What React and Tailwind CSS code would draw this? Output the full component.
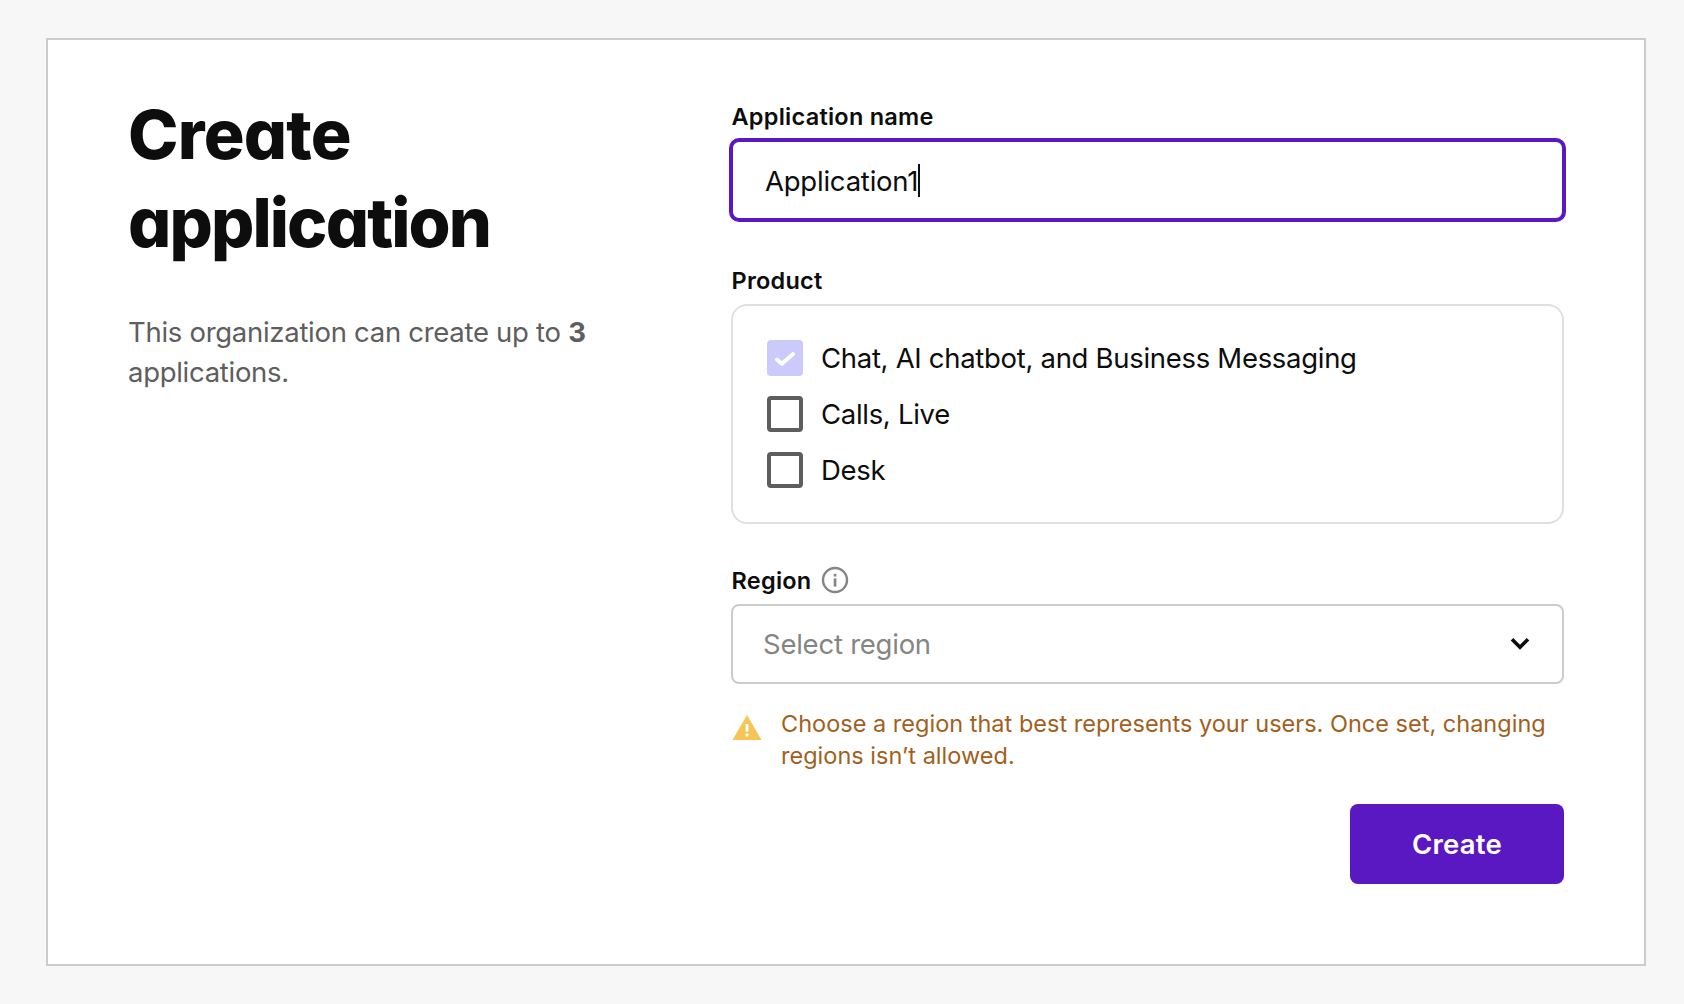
import React from 'react';

const products = [
  { label: 'Chat, AI chatbot, and Business Messaging', checked: true },
  { label: 'Calls, Live', checked: false },
  { label: 'Desk', checked: false },
];

function Checkbox({ checked }) {
  if (checked) {
    return (
      <span className="flex size-9 items-center justify-center rounded-[4px] bg-[#cccafa]">
        <svg className="size-9" viewBox="0 0 36 36" fill="none">
          <path d="M9.9 19.5L14.9 23.8L26.1 14" stroke="white" strokeWidth="3.8" strokeLinecap="round" strokeLinejoin="round" />
        </svg>
      </span>
    );
  }
  return <span className="size-9 rounded-[4px] border-4 border-[#5e5e5e]" />;
}

function Label({ children }) {
  return (
    <div className="flex h-8 items-center pl-[0.5px] text-[23.5px] leading-8 font-semibold tracking-[0.25px]">
      {children}
    </div>
  );
}

export default function App() {
  return (
    <div className="h-[1004px] w-[1684px] bg-[#f7f7f7] pt-[38px] pl-[46px] font-['Inter',sans-serif] text-[#0d0d0d]">
      <main className="flex h-[928px] w-[1600px] justify-between border-2 border-[#cccccc] bg-white px-20 pt-[50px]">
        <section className="w-[480px]">
          <h1 className="text-[68px] leading-[88px] font-extrabold [font-feature-settings:'cv11']">
            <span className="tracking-[-0.8px]">Create</span>
            <br />
            <span className="tracking-[-1.9px]">application</span>
          </h1>
          <p className="mt-[46px] text-[27.5px] leading-10 tracking-[-0.29px] text-[#5e5e5e]">
            This organization can create up to <b className="font-bold">3</b>
            <br />
            applications.
          </p>
        </section>

        <form className="flex w-[833px] flex-col">
          <div className="mt-[11px]">
            <Label>Application name</Label>
          </div>
          <div className="-mx-[2px] mt-[5px] -mb-[2px] flex h-[84px] items-center rounded-[10px] border-4 border-[#5a18c3] pl-[32px] text-[27.5px] tracking-[-0.22px]">
            <span className="pt-[4px]">Application1</span>
            <span className="h-[33px] w-[2px] bg-[#0d0d0d]" />
          </div>

          <div className="mt-[45px]">
            <Label>Product</Label>
          </div>
          <div className="mt-[7px] flex h-[220px] flex-col gap-5 rounded-2xl border-2 border-[#e0e0e0] px-[34px] pt-[34px]">
            {products.map((p) => (
              <div key={p.label} className="flex h-9 items-center gap-[18px] text-[27.5px] tracking-[-0.3px]">
                <Checkbox checked={p.checked} />
                <span className="pt-[2px]">{p.label}</span>
              </div>
            ))}
          </div>

          <div className="mt-10">
            <Label>
              <span className="pt-[2px]">Region</span>
              <svg className="ml-[7.5px] size-8" viewBox="0 0 32 32" fill="none">
                <circle cx="16" cy="16" r="12" stroke="#858585" strokeWidth="2.4" />
                <rect x="14.7" y="9.8" width="2.7" height="2.7" fill="#858585" />
                <rect x="14.7" y="14.4" width="2.7" height="8.2" fill="#858585" />
              </svg>
            </Label>
          </div>
          <div className="mt-2 flex h-20 items-center justify-between rounded-lg border-2 border-[#cccccc] pr-[26px] pl-[30px]">
            <span className="pt-[2px] text-[27.5px] tracking-[-0.24px] text-[#858585]">Select region</span>
            <svg className="size-8" viewBox="0 0 32 32" fill="none">
              <path d="M8 11.3L16 19.3L24 11.3" stroke="#0d0d0d" strokeWidth="3.6" />
            </svg>
          </div>

          <div className="mt-6 flex">
            <svg className="mt-1 h-8 w-8" viewBox="0 0 32 32">
              <path d="M16 3L30.5 28H1.5Z" fill="#f6c556" />
              <rect x="14.6" y="12" width="2.8" height="7.6" fill="white" />
              <rect x="14.6" y="21.6" width="2.8" height="2.8" fill="white" />
            </svg>
            <p className="ml-[18px] text-[23.5px] leading-8 tracking-[0.01px] whitespace-nowrap text-[#a25f20]">
              Choose a region that best represents your users. Once set, changing
              <br />
              regions isn’t allowed.
            </p>
          </div>

          <button
            type="button"
            className="mt-8 flex h-20 w-[214px] items-center justify-center self-end rounded-lg bg-[#5a18c3] pt-[2px] text-[27.5px] font-semibold tracking-[0.27px] text-white"
          >
            Create
          </button>
        </form>
      </main>
    </div>
  );
}
